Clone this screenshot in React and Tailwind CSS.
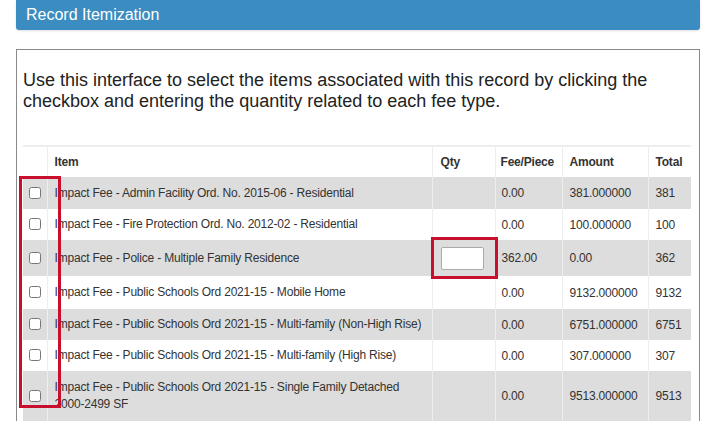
const rows = [
  ['Impact Fee - Admin Facility Ord. No. 2015-06 - Residential', '0.00', '381.000000', '381', false, 32],
  ['Impact Fee - Fire Protection Ord. No. 2012-02 - Residential', '0.00', '100.000000', '100', false, 31],
  ['Impact Fee - Police - Multiple Family Residence', '362.00', '0.00', '362', true, 36],
  ['Impact Fee - Public Schools Ord 2021-15 - Mobile Home', '0.00', '9132.000000', '9132', false, 33],
  ['Impact Fee - Public Schools Ord 2021-15 - Multi-family (Non-High Rise)', '0.00', '6751.000000', '6751', false, 31],
  ['Impact Fee - Public Schools Ord 2021-15 - Multi-family (High Rise)', '0.00', '307.000000', '307', false, 31],
  ['Impact Fee - Public Schools Ord 2021-15 - Single Family Detached 2000-2499 SF', '0.00', '9513.000000', '9513', false, 50],
];

export default function App() {
  return (
    <div className="w-[710px] h-[421px] overflow-hidden bg-white relative" style={{ fontFamily: '"Liberation Sans", Arial, sans-serif' }}>
      <div className="ml-4 w-[684px] h-[30px] bg-[#3b8dc1] rounded-b-[3px] text-white text-[16px] px-[10px] flex items-center shadow-sm">
        Record Itemization
      </div>
      <div className="ml-4 mt-[19px] w-[684px] border border-[#8a8a8a] pt-[20px] pl-[6px] pr-[8px]">
        <p className="text-[18px] leading-[21px] text-[#222] mb-[33px]">
          Use this interface to select the items associated with this record by clicking the checkbox and entering the quantity related to each fee type.
        </p>
        <table className="w-[668px] border-collapse text-[12px] tracking-[-0.2px] text-[#333] table-fixed">
          <colgroup>
            <col className="w-[24px]" />
            <col className="w-[385px]" />
            <col className="w-[63px]" />
            <col className="w-[67px]" />
            <col className="w-[86px]" />
            <col className="w-[43px]" />
          </colgroup>
          <thead>
            <tr className="h-[31px] border-t-2 border-[#eee]">
              <th className="border-r border-[#eee]"></th>
              <th className="text-left font-bold px-[7px] border-r border-[#eee]">Item</th>
              <th className="text-left font-bold px-[8px] border-r border-[#eee]">Qty</th>
              <th className="text-left font-bold px-[5px] border-r border-[#eee]">Fee/Piece</th>
              <th className="text-left font-bold px-[7px] border-r border-[#eee]">Amount</th>
              <th className="text-left font-bold px-[7px]">Total</th>
            </tr>
          </thead>
          <tbody>
            {rows.map(([item, fee, amt, tot, qty, h], i) => (
              <tr key={i} className={i % 2 === 0 ? 'bg-[#dddddd]' : 'bg-white'} style={{ height: h }}>
                <td className="text-center align-middle border-r border-[#eee]">
                  <input type="checkbox" className="w-[12px] h-[12px] mt-[4px]" />
                </td>
                <td className="pl-[7px] pr-[4px] leading-[17px] border-r border-[#eee]">{item}</td>
                <td className="px-[8px] border-r border-[#eee]">
                  {qty && <div className="w-[43px] h-[23px] bg-white border border-[#aaa] rounded-[2px]" />}
                </td>
                <td className="px-[6px] border-r border-[#eee]">{fee}</td>
                <td className="px-[7px] border-r border-[#eee]">{amt}</td>
                <td className="px-[7px]">{tot}</td>
              </tr>
            ))}
          </tbody>
        </table>
      </div>
      <div className="absolute left-[19px] top-[176px] w-[42px] h-[232px] border-[3px] border-[#c8102e]" />
      <div className="absolute left-[431px] top-[237px] w-[67px] h-[42px] border-[3px] border-[#c8102e]" />
    </div>
  );
}
